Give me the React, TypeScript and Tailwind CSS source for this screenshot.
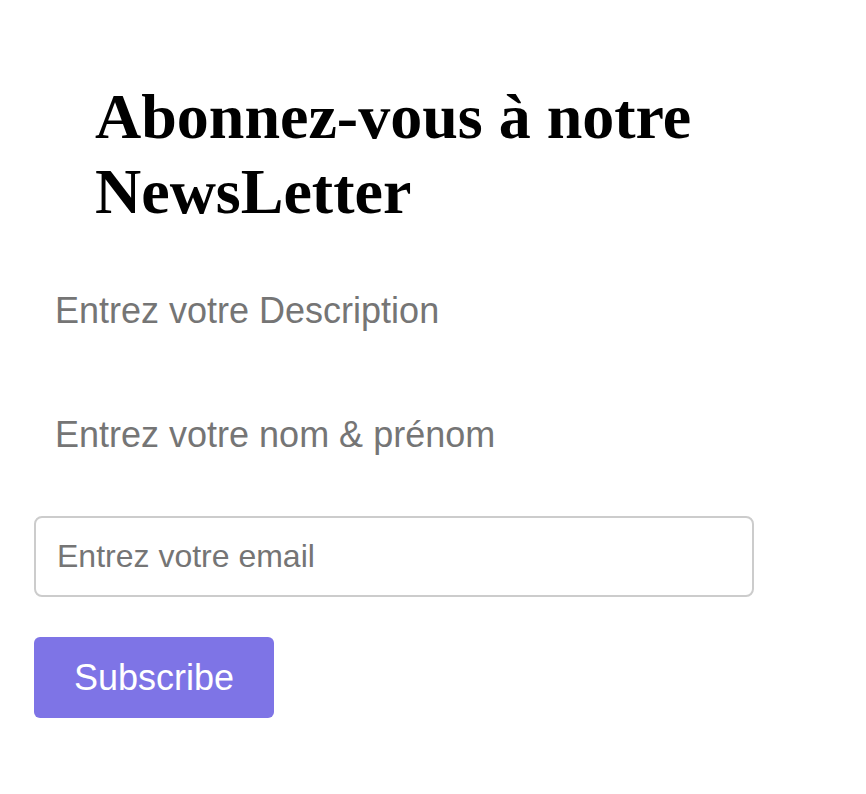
import React from "react";

export default function App() {
  return (
    <div className="min-h-[794px] w-full bg-white" style={{ fontFamily: '"Liberation Sans", Arial, sans-serif' }}>
      <div className="flex flex-col pt-[79px] px-[34px]">
        <h1
          className="pl-[61px] pr-[120px] text-[64px] font-bold leading-[75px] text-black"
          style={{ fontFamily: '"Liberation Serif", "Times New Roman", serif' }}
        >
          Abonnez-vous à notre NewsLetter
        </h1>
        <input
          type="text"
          placeholder="Entrez votre Description"
          className="mt-[41px] w-[720px] border-0 bg-transparent px-[21px] py-[20px] text-[36px] leading-[41px] text-black outline-none placeholder:text-[#757575]"
        />
        <input
          type="text"
          placeholder="Entrez votre nom & prénom"
          className="mt-[43px] w-[720px] border-0 bg-transparent px-[21px] py-[20px] text-[36px] leading-[41px] text-black outline-none placeholder:text-[#757575]"
        />
        <input
          type="email"
          placeholder="Entrez votre email"
          className="mt-[41px] h-[81px] w-[720px] rounded-[8px] border-2 border-[#cccccc] bg-white px-[21px] text-[32px] leading-[37px] text-black outline-none placeholder:text-[#757575]"
        />
        <div className="mt-[40px]">
          <button
            type="button"
            className="h-[81px] w-[240px] rounded-[6px] bg-[#7e74e6] text-[36px] leading-[41px] text-white"
          >
            Subscribe
          </button>
        </div>
      </div>
    </div>
  );
}
